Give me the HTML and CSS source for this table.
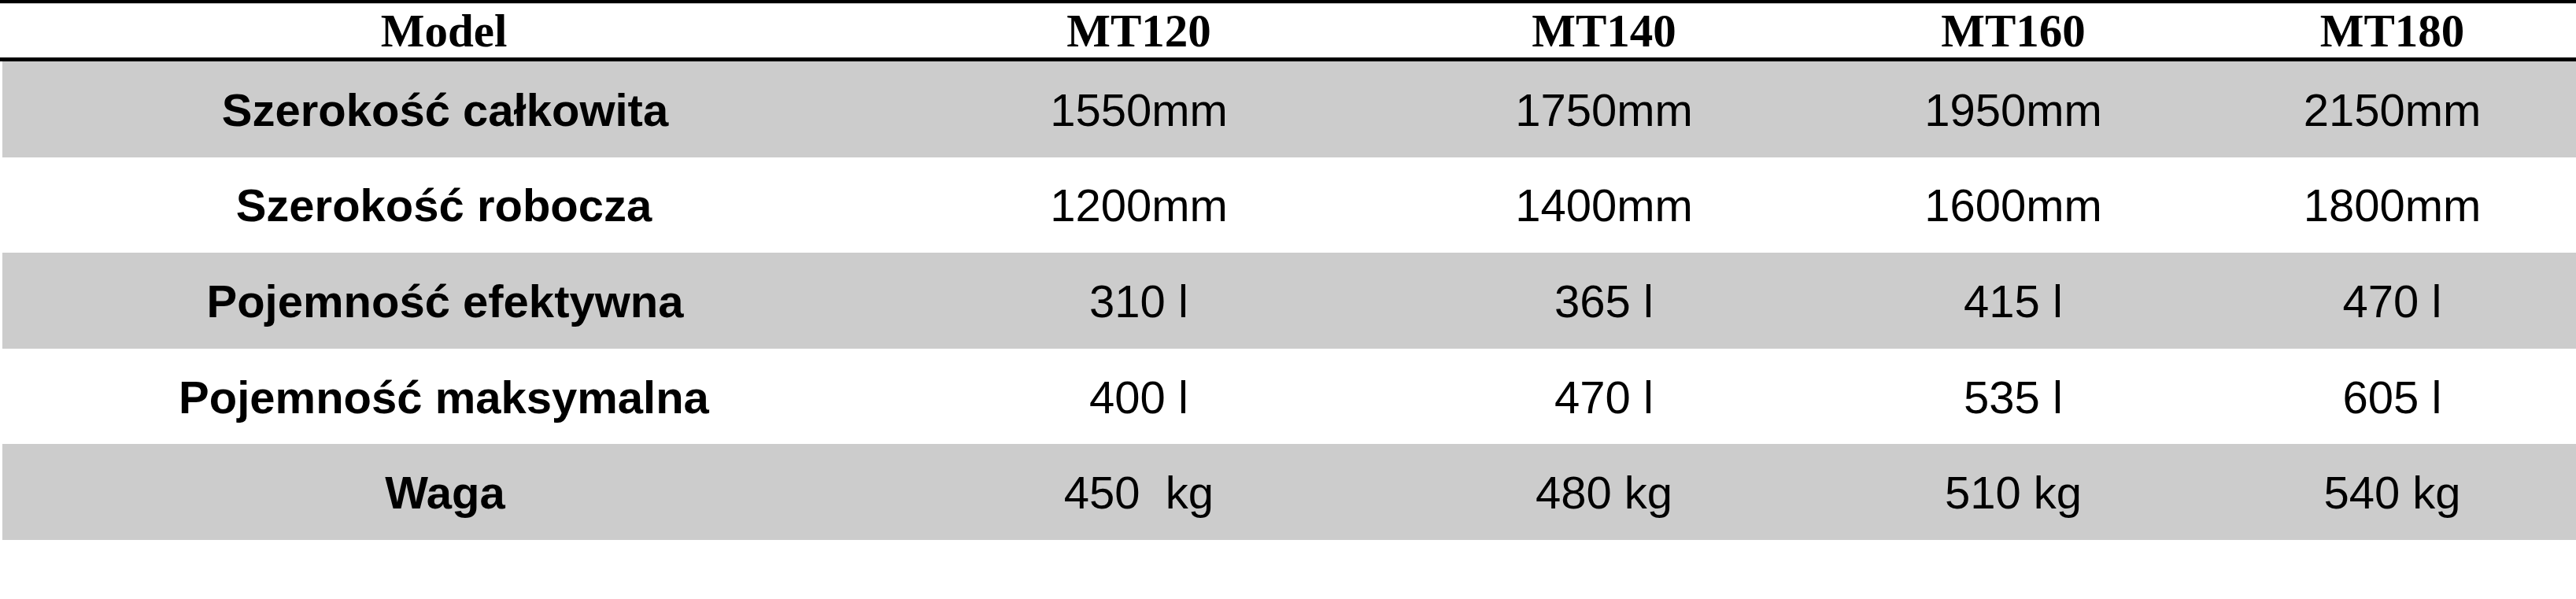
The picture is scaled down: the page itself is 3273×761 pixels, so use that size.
FILE: index.html
```html
<!DOCTYPE html>
<html lang="pl">
<head>
<meta charset="utf-8">
<title>Dane techniczne</title>
<link rel="stylesheet" href="styles.css">
</head>
<body>
<div class="spec">
  <div class="row head">
    <div class="cell">Model</div>
    <div class="cell">MT120</div>
    <div class="cell">MT140</div>
    <div class="cell">MT160</div>
    <div class="cell">MT180</div>
  </div>
  <div class="row body shaded">
    <div class="cell label">Szerokość całkowita</div>
    <div class="cell">1550mm</div>
    <div class="cell">1750mm</div>
    <div class="cell">1950mm</div>
    <div class="cell">2150mm</div>
  </div>
  <div class="row body">
    <div class="cell label">Szerokość robocza</div>
    <div class="cell">1200mm</div>
    <div class="cell">1400mm</div>
    <div class="cell">1600mm</div>
    <div class="cell">1800mm</div>
  </div>
  <div class="row body shaded">
    <div class="cell label">Pojemność efektywna</div>
    <div class="cell">310 l</div>
    <div class="cell">365 l</div>
    <div class="cell">415 l</div>
    <div class="cell">470 l</div>
  </div>
  <div class="row body">
    <div class="cell label">Pojemność maksymalna</div>
    <div class="cell">400 l</div>
    <div class="cell">470 l</div>
    <div class="cell">535 l</div>
    <div class="cell">605 l</div>
  </div>
  <div class="row body shaded last">
    <div class="cell label">Waga</div>
    <div class="cell">450&nbsp; kg</div>
    <div class="cell">480 kg</div>
    <div class="cell">510 kg</div>
    <div class="cell">540 kg</div>
  </div>
</div>
</body>
</html>
```

FILE: styles.css
```css
html, body {
  margin: 0;
  padding: 0;
  background: #ffffff;
}

.spec {
  width: 3273px;
  border-top: 4px solid #000000;
  box-sizing: border-box;
}

.row {
  display: grid;
  grid-template-columns: 1128px 638px 544px 496px 467px;
  align-items: center;
}

.cell {
  text-align: center;
  white-space: nowrap;
  color: #000000;
}

.head {
  height: 68px;
  border-top: 1px solid #c8c8c8;
  border-bottom: 5px solid #000000;
  font-family: "Liberation Serif", "Times New Roman", serif;
  font-weight: bold;
  font-size: 59px;
  line-height: 1;
}

.body {
  height: 121.6px;
  font-family: "Liberation Sans", Arial, sans-serif;
  font-size: 58px;
  line-height: 1;
}

.body .cell {
  padding-top: 2px;
}

.shaded {
  background: #cccccc;
  margin-left: 3px;
  grid-template-columns: 1125px 638px 544px 496px 467px;
}

.label {
  font-weight: bold;
}

.last {
  box-shadow: 0 4px 0 #000000, 0 5px 0 #c8c8c8;
}
```
